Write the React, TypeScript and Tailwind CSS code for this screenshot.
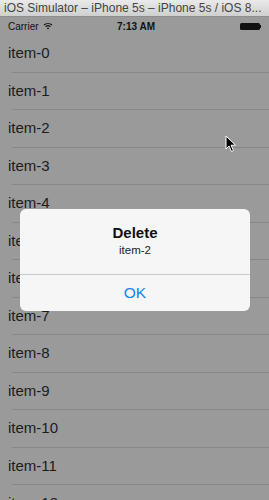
import React from 'react';

const items = Array.from({ length: 13 }, (_, i) => `item-${i}`);

const Cursor: React.FC = () => (
  <svg width="12" height="18" viewBox="0 0 12 18" className="absolute left-[225px] top-[135px]">
    <path d="M1 1 L1 14 L4 11 L6.5 16.5 L8.5 15.5 L6 10.2 L10.5 10.2 Z" fill="#000" stroke="#fff" strokeWidth="1" strokeLinejoin="round" />
  </svg>
);

const App: React.FC = () => {
  return (
    <div className="relative w-[269px] h-[500px] overflow-hidden bg-[#9a9a9a] font-['Liberation_Sans',sans-serif]">
      {/* Simulator window title */}
      <div className="h-[17px] flex items-center px-[4px] bg-gradient-to-b from-[#eaeaea] to-[#cfcfcf] border-b border-[#8e8e8e] overflow-hidden whitespace-nowrap">
        <span className="text-[12px] leading-none text-[#444]">
          iOS Simulator – iPhone 5s – iPhone 5s / iOS 8...
        </span>
      </div>

      {/* Status bar */}
      <div className="relative h-[18px] flex items-center px-[8px] text-[10px] text-[#111]">
        <div className="flex items-center gap-[4px]">
          <span>Carrier</span>
          <svg width="10" height="8" viewBox="0 0 10 8">
            <path d="M1 3 A6 6 0 0 1 9 3" stroke="#111" strokeWidth="1.1" fill="none" />
            <path d="M2.6 4.6 A3.8 3.8 0 0 1 7.4 4.6" stroke="#111" strokeWidth="1.1" fill="none" />
            <path d="M5 7.5 L3.8 6.1 A1.8 1.8 0 0 1 6.2 6.1 Z" fill="#111" />
          </svg>
        </div>
        <span className="absolute left-[117px] font-bold">7:13 AM</span>
        <div className="ml-auto flex items-center">
          <div className="w-[20px] h-[7px] rounded-[1.5px] bg-[#111]" />
          <div className="w-[1.5px] h-[3px] bg-[#111]" />
        </div>
      </div>

      {/* Table rows */}
      <div className="flex flex-col">
        {items.map(item => (
          <div key={item} className="h-[37.5px] shrink-0 flex flex-col">
            <div className="flex-1 flex items-center pl-[8px] text-[15px] text-[#1c1c1c]">{item}</div>
            <div className="ml-[12px] h-px bg-[#878787]" />
          </div>
        ))}
      </div>

      {/* Alert */}
      <div className="absolute left-[20px] top-[209px] w-[230px] h-[102px] rounded-[6px] bg-[#f6f6f6] flex flex-col overflow-hidden">
        <div className="h-[65px] flex flex-col items-center pt-[15px]">
          <div className="text-[15px] leading-[18px] font-bold text-[#111]">Delete</div>
          <div className="text-[11.5px] leading-[14px] mt-[1px] text-[#222]">item-2</div>
        </div>
        <div className="h-px bg-[#c9c9c9]" />
        <div className="flex-1 flex items-center justify-center text-[15.5px] text-[#1682f5]">OK</div>
      </div>

      <Cursor />
    </div>
  );
};

export default App;
